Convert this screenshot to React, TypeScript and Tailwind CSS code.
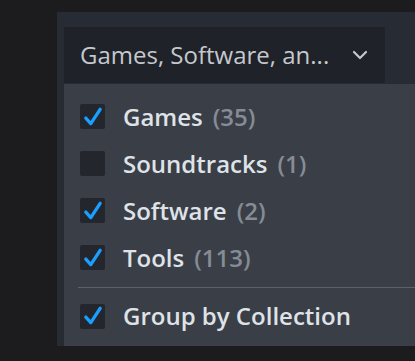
const items = [
  { label: 'Games', count: 35, checked: true },
  { label: 'Soundtracks', count: 1, checked: false },
  { label: 'Software', count: 2, checked: true },
  { label: 'Tools', count: 113, checked: true },
];

const Check = ({ checked }: { checked: boolean }) => (
  <div className="flex h-[25px] w-[25px] shrink-0 items-center justify-center rounded-[2px] bg-[#23262d]">
    {checked && (
      <svg width="22" height="22" viewBox="0 0 20 20" fill="none">
        <path d="M3.5 11 L8 16 L16.5 3" stroke="#1a9fff" strokeWidth="3" strokeLinecap="round" strokeLinejoin="round" />
      </svg>
    )}
  </div>
);

const Row = ({ label, count, checked }: { label: string; count?: number; checked: boolean }) => (
  <div className="flex h-[47px] items-center gap-[18px] pl-[16px]">
    <Check checked={checked} />
    <span className="text-[24px] font-semibold leading-none text-[#dfe3e7]">
      {label}
      {count !== undefined && <span className="ml-[10px] text-[#858c95]">({count})</span>}
    </span>
  </div>
);

export default function App() {
  return (
    <div
      className="flex h-[361px] w-[415px] flex-col overflow-hidden bg-[#1c1c1e] pl-[57px] pt-[12px]"
      style={{ fontFamily: '"Open Sans", "Noto Sans", sans-serif' }}
    >
      <div className="flex h-[334px] flex-col bg-[#272b33] pl-[7px] pt-[15px]">
        {/* filter button */}
        <div className="flex h-[56px] w-[321px] items-center justify-between bg-[#1f2228] pl-[16px] pr-[17px]">
          <span className="text-[24px] font-medium leading-none text-[#c5c9ce]">Games, Software, an...</span>
          <svg width="16" height="10" viewBox="0 0 16 10" fill="none">
            <path d="M2 2 L8 8 L14 2" stroke="#c5c9ce" strokeWidth="2.2" strokeLinecap="round" strokeLinejoin="round" />
          </svg>
        </div>

        {/* dropdown menu */}
        <div className="mt-[1px] flex flex-1 flex-col bg-[#3a3e47] pt-[9px]">
          {items.map((it) => (
            <Row key={it.label} {...it} />
          ))}
          <div className="ml-[14px] mt-[6px] h-[1px] bg-[#5d616b]" />
          <div className="flex h-[56px] items-center gap-[18px] pl-[16px]">
            <Check checked />
            <span className="text-[24px] font-semibold leading-none text-[#dfe3e7]">Group by Collection</span>
          </div>
        </div>
      </div>
    </div>
  );
}
